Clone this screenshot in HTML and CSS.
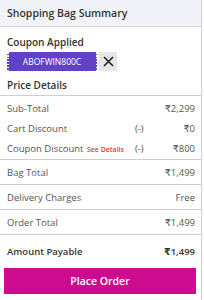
FILE: index.html
```html
<!DOCTYPE html>
<html>
<head>
<meta charset="utf-8">
<link rel="stylesheet" href="styles.css">
</head>
<body>
<div class="panel">
  <div class="header">Shopping Bag Summary</div>
  <div class="coupon-sec">
    <div class="title">Coupon Applied</div>
    <div class="coupon-row">
      <div class="coupon">ABOFWIN800C</div>
      <div class="remove">
        <svg width="11" height="11" viewBox="0 0 11 11"><path d="M1 1L10 10M10 1L1 10" stroke="#222" stroke-width="1.6" fill="none"/></svg>
      </div>
    </div>
    <div class="title pd">Price Details</div>
  </div>
  <div class="list">
    <div class="row"><span class="lbl">Sub-Total</span><span class="minus"></span><span class="val">₹2,299</span></div>
    <div class="row"><span class="lbl">Cart Discount</span><span class="minus">(-)</span><span class="val">₹0</span></div>
    <div class="row"><span class="lbl">Coupon Discount <span class="see">See Details</span></span><span class="minus">(-)</span><span class="val">₹800</span></div>
  </div>
  <div class="line"><span class="lbl">Bag Total</span><span class="val">₹1,499</span></div>
  <div class="line"><span class="lbl">Delivery Charges</span><span class="val">Free</span></div>
  <div class="line"><span class="lbl">Order Total</span><span class="val">₹1,499</span></div>
  <div class="payable"><span>Amount Payable</span><span>₹1,499</span></div>
  <div class="btn">Place Order</div>
</div>
</body>
</html>
```
FILE: styles.css
```css
html, body { margin: 0; padding: 0; background: #fff; }
body { font-family: "Open Sans", "DejaVu Sans", sans-serif; }
.panel { width: 202px; border-right: 1px solid #cfcfcf; height: 300px; box-sizing: border-box; }
.header { height: 26px; line-height: 26px; background: #f2f3f8; border-bottom: 1px solid #cfcfcf; padding-left: 7px; font-size: 10.5px; font-weight: 600; color: #333; }
.coupon-sec { padding: 8px 7px 3px; border-bottom: 1px solid #cfcfcf; }
.title { font-size: 10px; font-weight: 600; line-height: 14px; color: #333; }
.title.pd { margin-top: 7px; }
.coupon-row { display: flex; margin-top: 3px; gap: 2px; height: 19px; }
.coupon { position: relative; width: 90px; height: 19px; background: #5f42c8; color: #fff; font-size: 8.5px; line-height: 19px; text-align: center; }
.coupon::before, .coupon::after { content: ""; position: absolute; top: 0; bottom: 0; width: 1.5px; background: repeating-linear-gradient(to bottom, #fff 0 1.5px, transparent 1.5px 3px); }
.coupon::before { left: 0; }
.coupon::after { right: 0; }
.remove { width: 18px; height: 19px; background: #e6e6e6; display: flex; align-items: center; justify-content: center; }
.list { padding: 2px 6px 1px 7px; border-bottom: 1px solid #cfcfcf; }
.row { display: grid; grid-template-columns: 1fr 12px 48px; height: 20px; align-items: center; font-size: 9.5px; color: #555; }
.lbl { white-space: nowrap; }
.minus { }
.val { text-align: right; }
.see { color: #e23b3b; font-size: 7px; font-weight: 600; margin-left: 1px; }
.line { display: flex; justify-content: space-between; height: 24px; align-items: center; padding: 0 6px 0 7px; border-bottom: 1px solid #cfcfcf; font-size: 9.5px; color: #555; }
.payable { display: flex; justify-content: space-between; align-items: center; height: 33px; padding: 0 6px 0 7px; font-size: 9.5px; font-weight: 600; color: #333; }
.btn { margin: 0 5px 0 4px; height: 26px; line-height: 26px; background: #cc0b8f; color: #fff; text-align: center; font-size: 10.5px; font-weight: 600; }
```
